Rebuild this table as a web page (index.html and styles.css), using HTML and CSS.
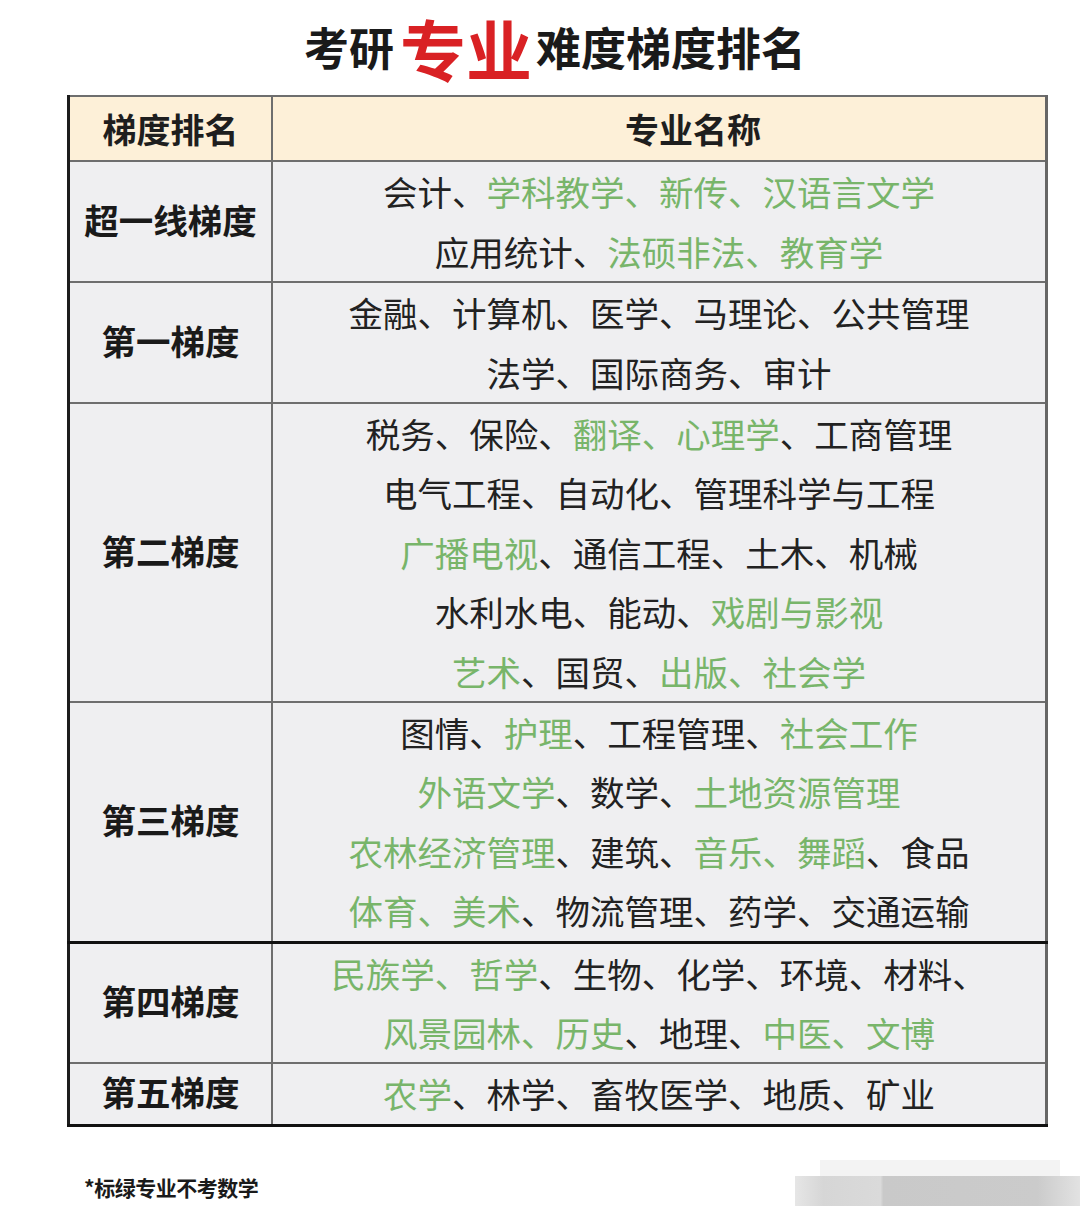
FILE: index.html
```html
<!DOCTYPE html>
<html lang="zh-CN">
<head>
<meta charset="utf-8">
<title>考研专业难度梯度排名</title>
<link rel="stylesheet" href="styles.css">
</head>
<body>
<div class="page">
  <h1 class="title"><span class="t-dark">考研</span><span class="t-red">专业</span><span class="t-dark">难度梯度排名</span></h1>
  <table class="rank">
    <thead>
      <tr>
        <th class="label">梯度排名</th>
        <th class="names head-names">专业名称</th>
      </tr>
    </thead>
    <tbody>
      <tr>
        <td class="label">超一线梯度</td>
        <td class="names">会计、<span class="g">学科教学、新传、汉语言文学</span><br>应用统计、<span class="g">法硕非法、教育学</span></td>
      </tr>
      <tr>
        <td class="label">第一梯度</td>
        <td class="names">金融、计算机、医学、马理论、公共管理<br>法学、国际商务、审计</td>
      </tr>
      <tr>
        <td class="label">第二梯度</td>
        <td class="names">税务、保险、<span class="g">翻译、心理学</span>、工商管理<br>电气工程、自动化、管理科学与工程<br><span class="g">广播电视</span>、通信工程、土木、机械<br>水利水电、能动、<span class="g">戏剧与影视</span><br><span class="g">艺术</span>、国贸、<span class="g">出版、社会学</span></td>
      </tr>
      <tr class="thick">
        <td class="label">第三梯度</td>
        <td class="names">图情、<span class="g">护理</span>、工程管理、<span class="g">社会工作</span><br><span class="g">外语文学</span>、数学、<span class="g">土地资源管理</span><br><span class="g">农林经济管理</span>、建筑、<span class="g">音乐、舞蹈</span>、食品<br><span class="g">体育、美术</span>、物流管理、药学、交通运输</td>
      </tr>
      <tr>
        <td class="label">第四梯度</td>
        <td class="names"><span class="g">民族学、哲学</span>、生物、化学、环境、材料、<br><span class="g">风景园林、历史</span>、地理、<span class="g">中医、文博</span></td>
      </tr>
      <tr>
        <td class="label">第五梯度</td>
        <td class="names"><span class="g">农学</span>、林学、畜牧医学、地质、矿业</td>
      </tr>
    </tbody>
  </table>
  <div class="footer">
    <p class="note">*标绿专业不考数学</p>
    <div class="smudge">
      <div class="smudge-top"></div>
      <div class="smudge-bar"></div>
    </div>
  </div>
</div>
</body>
</html>
```

FILE: styles.css
```css
html, body {
  margin: 0;
  padding: 0;
  background: #ffffff;
}

body {
  font-family: "Noto Sans CJK SC", "Noto Sans", sans-serif;
  color: #1e1e1e;
  width: 1080px;
  height: 1222px;
  overflow: hidden;
}

.page {
  display: flex;
  flex-direction: column;
}

.title {
  margin: 0;
  padding: 0 0 6px 30px;
  text-align: center;
  font-weight: 700;
  letter-spacing: 0;
  line-height: 84px;
  white-space: nowrap;
}

.t-dark {
  font-size: 45px;
  color: #1a1a1a;
  vertical-align: middle;
}

.t-red {
  font-size: 66px;
  color: #d92124;
  margin: 0 4px 0 6px;
  vertical-align: middle;
}

.rank {
  margin-left: 67px;
  width: 981px;
  border-collapse: collapse;
  table-layout: fixed;
  border-left: 3px solid #1c1c1c;
  border-right: 3px solid #666666;
  border-top: 2px solid #777777;
  border-bottom: 3px solid #111111;
}

.rank th,
.rank td {
  border: 2px solid #6e6e6e;
  padding: 0;
  text-align: center;
  vertical-align: middle;
}

.rank thead th {
  background: #fdf0d8;
  height: 63px;
  font-size: 34px;
  font-weight: 700;
  color: #1e1e1e;
}

.rank td {
  background: #efeff1;
}

.label {
  width: 201px;
  font-size: 34.5px;
  font-weight: 700;
  color: #1a1a1a;
}

td.label {
  padding-bottom: 4px;
  line-height: 1.2;
}

.names {
  font-size: 34.5px;
  line-height: 59.4px;
  font-weight: 400;
  color: #222222;
}

th.head-names {
  padding-left: 68px;
}

.g {
  color: #78b56a;
}

.rank tr.thick td {
  border-bottom: 3px solid #111111;
}

.footer {
  display: flex;
  justify-content: space-between;
  align-items: flex-start;
  margin-top: 45px;
}

.note {
  margin: 0 0 0 84px;
  font-size: 21px;
  font-weight: 700;
  letter-spacing: -0.5px;
  color: #1a1a1a;
}

.smudge {
  width: 285px;
  display: flex;
  flex-direction: column;
  align-items: flex-end;
  margin-top: -12px;
}

.smudge-top {
  width: 240px;
  height: 16px;
  margin-right: 20px;
  background: #f3f3f3;
}

.smudge-bar {
  width: 285px;
  height: 30px;
  background: linear-gradient(90deg, #e6e6e6 0%, #d6d6d6 10%, #dadada 30%, #c9c9c9 31%, #cbcbcb 85%, #e2e2e2 100%);
}
```
